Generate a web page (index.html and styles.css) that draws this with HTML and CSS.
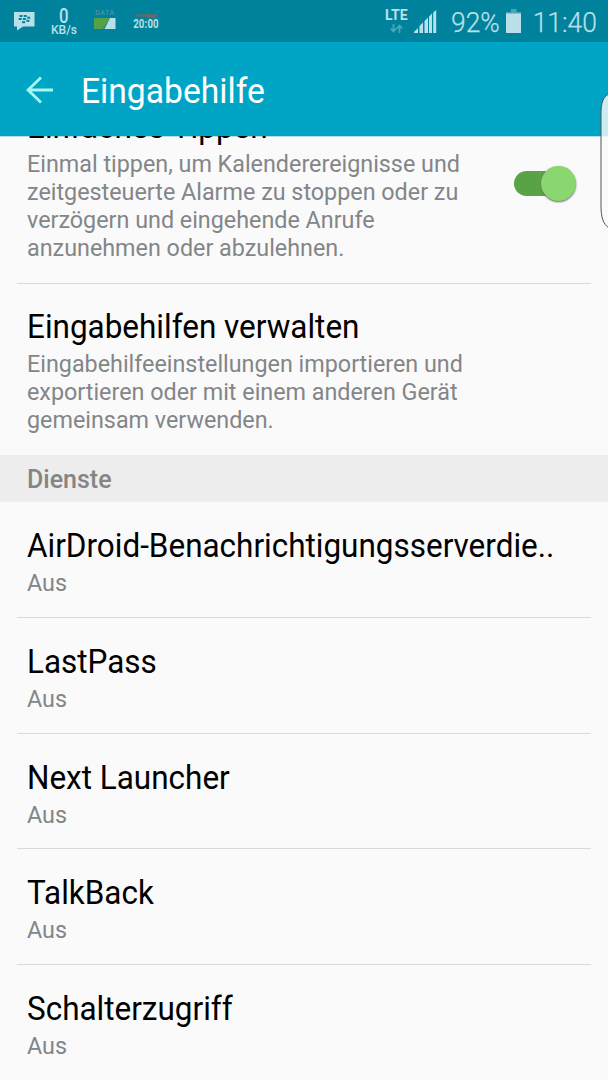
FILE: index.html
```html
<!DOCTYPE html>
<html lang="de">
<head>
<meta charset="utf-8">
<title>Eingabehilfe</title>
<link rel="stylesheet" href="styles.css">
</head>
<body>
<div class="screen">
  <div class="status">
    <div class="status-left">
      <svg class="bbm" width="21" height="19" viewBox="0 0 21 19"><path d="M0 0h20.500v14.500H9L3 18.500V14.500H0z" fill="#b9e0e8"/><g fill="#00829c"><rect x="5.500" y="3" width="3" height="2"/><rect x="9.700" y="3" width="3" height="2"/><rect x="4.700" y="6" width="3" height="2"/><rect x="8.900" y="6" width="3" height="2"/><rect x="13.200" y="4.700" width="3" height="2"/><rect x="8.100" y="9.200" width="3" height="2"/><rect x="12.400" y="7.800" width="3" height="2"/></g></svg>
      <div class="speed"><span class="speed-num">0</span><span class="speed-unit">KB/s</span></div>
      <div class="data"><span class="data-label">DATA</span><svg width="22" height="11" viewBox="0 0 22 11"><path d="M0 0h16L9 11H0z" fill="#55a148"/><path d="M16 0h5.500V11H10.500z" fill="#b9e0e8"/></svg></div>
      <div class="clock-note"><svg width="26" height="6" viewBox="0 0 26 6"><path d="M0 1.500h14l-1-1.500 6 1.500h6v2h-4l4 2-9-1.500-1 1-3-1.500H1l4-1z" fill="#7b625f"/></svg><span class="note-time">20:00</span></div>
    </div>
    <div class="status-right">
      <div class="lte"><span class="lte-label">LTE</span><svg width="13" height="9" viewBox="0 0 13 9"><path d="M3.500 0v7M.7 4.500l2.800 3 2.800-3M9.500 9V2M6.700 4.500l2.800-3 2.800 3" fill="none" stroke="#49a6b8" stroke-width="1.800"/></svg></div>
      <svg class="signal" width="23" height="23" viewBox="0 0 23 23"><path d="M0 23v-1l4-4v5zM5.500 23v-7L9 12.500V23zM10.500 23V11L14 7.500V23zM15 23V6.500L18 3.500V23zM19.200 23V2.500l3-2.500v23z" fill="#b9e0e8"/></svg>
      <span class="percent">92%</span>
      <svg class="battery" width="15" height="24" viewBox="0 0 15 24"><path d="M5 0h5.500v3H15v2H0V3h5z" fill="#49a6b8"/><path d="M0 4.500h15V24H0z" fill="#b9e0e8"/></svg>
      <span class="time">11:40</span>
    </div>
  </div>
  <header class="appbar">
    <svg class="back" width="28" height="28" viewBox="0 0 28 28"><path d="M27 14H2M15 1.500L2 14l13 12.500" fill="none" stroke="#a5f7f0" stroke-width="2.800"/></svg>
    <h1 class="page-title">Eingabehilfe</h1>
  </header>
  <main class="list">
    <section class="row row-first">
      <div class="copy">
        <h2 class="title">Einfaches Tippen</h2>
        <p class="summary">Einmal tippen, um Kalenderereignisse und<br>zeitgesteuerte Alarme zu stoppen oder zu<br>verzögern und eingehende Anrufe<br>anzunehmen oder abzulehnen.</p>
      </div>
      <div class="switch"><span class="thumb"></span></div>
    </section>
    <section class="row row-manage">
      <div class="copy">
        <h2 class="title">Eingabehilfen verwalten</h2>
        <p class="summary">Eingabehilfeeinstellungen importieren und<br>exportieren oder mit einem anderen Gerät<br>gemeinsam verwenden.</p>
      </div>
    </section>
    <h3 class="group">Dienste</h3>
    <section class="row service"><div class="copy"><h2 class="title">AirDroid-Benachrichtigungsserverdie..</h2><p class="summary">Aus</p></div></section>
    <section class="row service"><div class="copy"><h2 class="title">LastPass</h2><p class="summary">Aus</p></div></section>
    <section class="row service"><div class="copy"><h2 class="title">Next Launcher</h2><p class="summary">Aus</p></div></section>
    <section class="row service"><div class="copy"><h2 class="title">TalkBack</h2><p class="summary">Aus</p></div></section>
    <section class="row service"><div class="copy"><h2 class="title">Schalterzugriff</h2><p class="summary">Aus</p></div></section>
  </main>
  <svg class="edge-handle" width="8" height="140" viewBox="0 0 8 140"><path d="M9 2C3 4.500 1 11 1 22v92c0 11 2 18 8 22z" fill="#fafafa" fill-opacity=".82" stroke="#555" stroke-width="1"/></svg>
</div>
</body>
</html>
```

FILE: styles.css
```css
* { box-sizing: border-box; }
body { margin: 0; font-family: Roboto, "Liberation Sans", sans-serif; background: #fafafa; }
h1, h2, h3, p { margin: 0; font-weight: 400; }
svg { display: block; flex: none; }
.screen { position: relative; width: 608px; height: 1080px; overflow: hidden; display: flex; flex-direction: column; }
.status { height: 42px; flex: none; background: #00829c; color: #b9e0e8; display: flex; justify-content: space-between; padding: 0 11px 0 14px; }
.status-left, .status-right { display: flex; align-items: flex-start; }
.bbm { margin-top: 12px; }
.speed { margin-left: 15px; width: 28px; padding-top: 7px; display: flex; flex-direction: column; align-items: center; }
.speed-num { font-size: 20px; line-height: 18px; font-weight: 500; transform: scaleX(.84); }
.speed-unit { font-size: 12px; line-height: 10px; font-weight: 500; }
.data { margin-left: 16px; width: 22px; padding-top: 9px; display: flex; flex-direction: column; align-items: center; }
.data-label { font-size: 7px; line-height: 8px; letter-spacing: .6px; color: #6299a4; margin-bottom: 1px; }
.clock-note { margin-left: 17px; padding-top: 13px; display: flex; flex-direction: column; align-items: center; }
.note-time { font-size: 12px; line-height: 11px; font-weight: 700; letter-spacing: .2px; transform: scaleX(.8); margin: 0 -4px; }
.lte { width: 24px; padding-top: 9px; display: flex; flex-direction: column; align-items: center; }
.lte-label { font-size: 14px; line-height: 12px; font-weight: 700; margin-bottom: 3px; }
.signal { margin: 10px 0 0 6px; }
.percent, .time { font-size: 27.5px; line-height: 32px; padding-top: 6.500px; font-weight: 300; transform-origin: right; -webkit-text-stroke: .25px #b9e0e8; }
.percent { margin-left: 12px; transform: scaleX(.96); }
.battery { margin: 9px 0 0 6px; }
.time { margin-left: 9px; transform: scaleX(.96); }
.appbar { height: 94px; flex: none; position: relative; background: #00a5c5; display: flex; align-items: center; padding: 2px 26px 0; box-shadow: 0 1px 0 #b7dfe6; }
.back { margin-top: -1px; }
.page-title { margin: 2px 0 0 27px; font-size: 34.5px; line-height: 40px; color: #fff; transform: scaleX(.975); transform-origin: left; }
.list { flex: 1; overflow: hidden; min-height: 0; }
.row { position: relative; display: flex; justify-content: space-between; align-items: center; margin: 0 17px; padding: 3px 15px 0 10px; border-bottom: 1px solid #d9d9d9; }
.row-first { height: 199px; margin-top: -51px; padding-top: 1px; }
.row-manage { height: 171px; border-bottom: 0; }
.title { font-size: 33.5px; line-height: 37px; margin-bottom: 5px; color: #000; white-space: nowrap; transform: scaleX(.939); transform-origin: left; }
.summary { font-size: 24.5px; line-height: 28px; color: #838688; white-space: nowrap; transform: scaleX(.952); transform-origin: left; }
.switch { width: 62px; height: 25px; margin-top: -3px; border-radius: 13px; background: linear-gradient(90deg, #57a345 50px, transparent 50px); display: flex; justify-content: flex-end; align-items: center; }
.thumb { width: 35px; height: 35px; flex: none; border-radius: 50%; background: #8ad66f; box-shadow: 0 1px 2px #666; }
.group { height: 47.4px; padding-left: 27px; line-height: 49px; font-size: 25px; font-weight: 500; color: #858585; background: #ededed; }
.service { height: 115.7px; padding-top: 5px; }
.service:last-child { border-bottom-color: transparent; }
.edge-handle { position: absolute; right: 0; top: 92px; }
```
